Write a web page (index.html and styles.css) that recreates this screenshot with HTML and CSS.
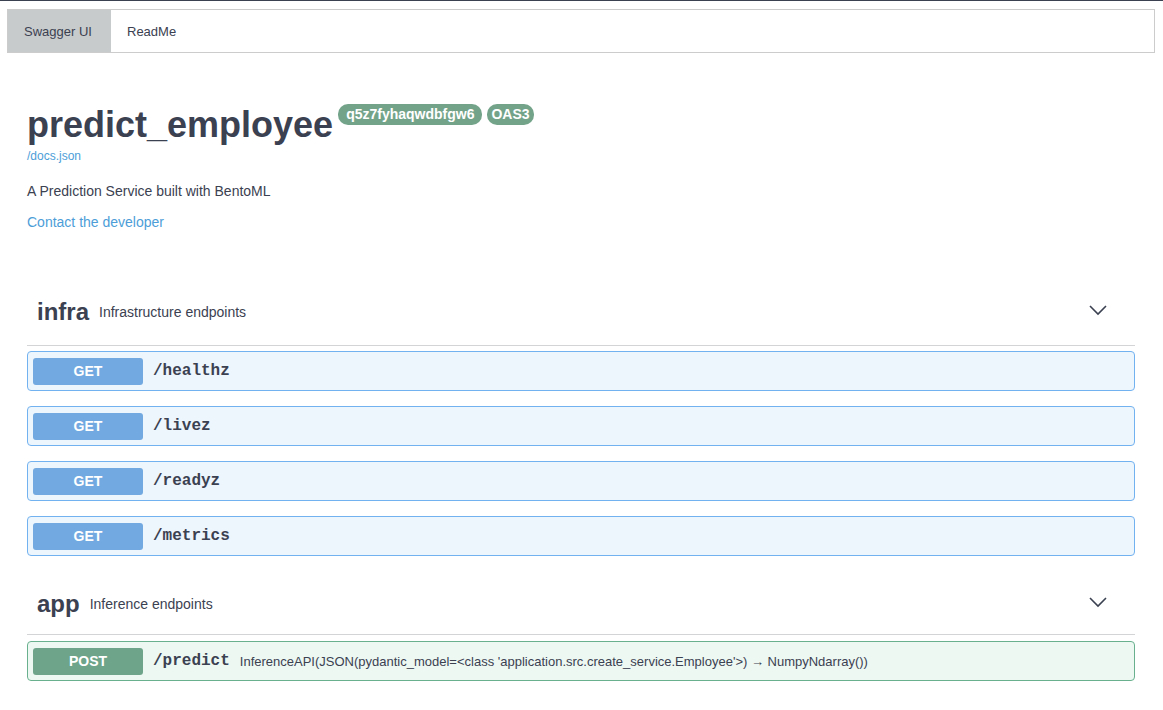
FILE: index.html
```html
<!DOCTYPE html>
<html>
<head>
<meta charset="utf-8">
<link rel="stylesheet" href="styles.css">
</head>
<body>
<div class="topline"></div>
<div class="page">
  <nav class="tabs">
    <div class="tab active">Swagger UI</div>
    <div class="tab">ReadMe</div>
  </nav>
  <div class="info">
    <div class="title-row">
      <h1 class="title">predict_employee</h1>
      <span class="badge version">q5z7fyhaqwdbfgw6</span>
      <span class="badge oas">OAS3</span>
    </div>
    <a class="link small">/docs.json</a>
    <p class="desc">A Prediction Service built with BentoML</p>
    <a class="link contact">Contact the developer</a>
  </div>

  <section class="tag infra">
    <div class="tag-head">
      <span class="tag-name">infra</span>
      <span class="tag-desc">Infrastructure endpoints</span>
      <svg class="chev" width="20" height="20" viewBox="0 0 20 20"><path d="M2 6 L10 14 L18 6" fill="none" stroke="#3b4151" stroke-width="1.6"/></svg>
    </div>
    <div class="ops">
      <div class="op get"><span class="method">GET</span><span class="path">/healthz</span></div>
      <div class="op get"><span class="method">GET</span><span class="path">/livez</span></div>
      <div class="op get"><span class="method">GET</span><span class="path">/readyz</span></div>
      <div class="op get"><span class="method">GET</span><span class="path">/metrics</span></div>
    </div>
  </section>

  <section class="tag app">
    <div class="tag-head">
      <span class="tag-name">app</span>
      <span class="tag-desc">Inference endpoints</span>
      <svg class="chev" width="20" height="20" viewBox="0 0 20 20"><path d="M2 6 L10 14 L18 6" fill="none" stroke="#3b4151" stroke-width="1.6"/></svg>
    </div>
    <div class="ops">
      <div class="op post"><span class="method">POST</span><span class="path">/predict</span><span class="summary">InferenceAPI(JSON(pydantic_model=&lt;class 'application.src.create_service.Employee'&gt;) → NumpyNdarray())</span></div>
    </div>
  </section>
</div>
</body>
</html>
```

FILE: styles.css
```css
html, body {
  margin: 0;
  padding: 0;
  background: #fff;
  font-family: "Liberation Sans", Arial, sans-serif;
  color: #3b4151;
}
.topline {
  height: 1px;
  background: #3b4151;
}
.page {
  padding: 8px 8px 0 7px;
}
.tabs {
  display: flex;
  border: 1px solid #cccccc;
  height: 42px;
}
.tab {
  display: flex;
  align-items: center;
  padding: 0 16px;
  font-size: 13px;
  color: #3b4151;
}
.tab.active {
  background: #c8cbcc;
  width: 71px;
}
.info {
  padding: 45px 0 0 20px;
}
.title-row {
  display: flex;
  align-items: flex-start;
}
.title {
  margin: 5px 0 0;
  font-size: 36px;
  font-weight: bold;
  line-height: 44px;
}
.badge {
  display: inline-block;
  background: #73a48a;
  color: #fff;
  font-weight: bold;
  font-size: 14px;
  line-height: 21px;
  height: 21px;
  border-radius: 10px;
  margin-top: 6px;
}
.badge.version {
  margin-left: 5px;
  padding: 0 8px;
}
.badge.oas {
  margin-left: 5px;
  padding: 0 4px;
}
.link {
  color: #4d9ed8;
  text-decoration: none;
  display: block;
}
.small {
  font-size: 12px;
  margin-top: 2px;
  line-height: 14px;
}
.desc {
  margin: 19px 0 0;
  font-size: 14px;
  line-height: 18px;
}
.contact {
  font-size: 14px;
  margin-top: 13px;
  line-height: 18px;
}
.tag {
  padding: 0 20px;
}
.tag.infra {
  margin-top: 48px;
}
.tag.app {
  margin-top: 17px;
}
.tag-head {
  display: flex;
  align-items: center;
  height: 66px;
  padding: 0 10px;
  border-bottom: 1px solid #d3d4d6;
  margin-bottom: 5px;
}
.app .tag-head {
  height: 61px;
  margin-bottom: 6px;
}
.tag-name {
  font-size: 24px;
  font-weight: bold;
  margin-right: 10px;
}
.tag-desc {
  font-size: 14px;
  flex: 1;
}
.chev {
  margin-right: 17px;
  margin-top: -4px;
}
.ops {
  display: flex;
  flex-direction: column;
  gap: 15px;
}
.op {
  display: flex;
  align-items: center;
  height: 38px;
  padding: 0 5px;
  border: 1px solid;
  border-radius: 4px;
}
.op.get {
  background: #edf5fd;
  border-color: #73b2f0;
}
.op.post {
  background: #edf8f3;
  border-color: #69b08e;
}
.method {
  width: 110px;
  height: 27px;
  line-height: 27px;
  border-radius: 3px;
  text-align: center;
  color: #fff;
  font-weight: bold;
  font-size: 14px;
}
.get .method { background: #72a9e0; }
.post .method { background: #6ea58a; }
.path {
  font-family: "Liberation Mono", "Courier New", monospace;
  font-weight: bold;
  font-size: 16px;
  margin-left: 10px;
  color: #3b4151;
}
.summary {
  font-size: 13px;
  margin-left: 10px;
  color: #3b4151;
}
```
